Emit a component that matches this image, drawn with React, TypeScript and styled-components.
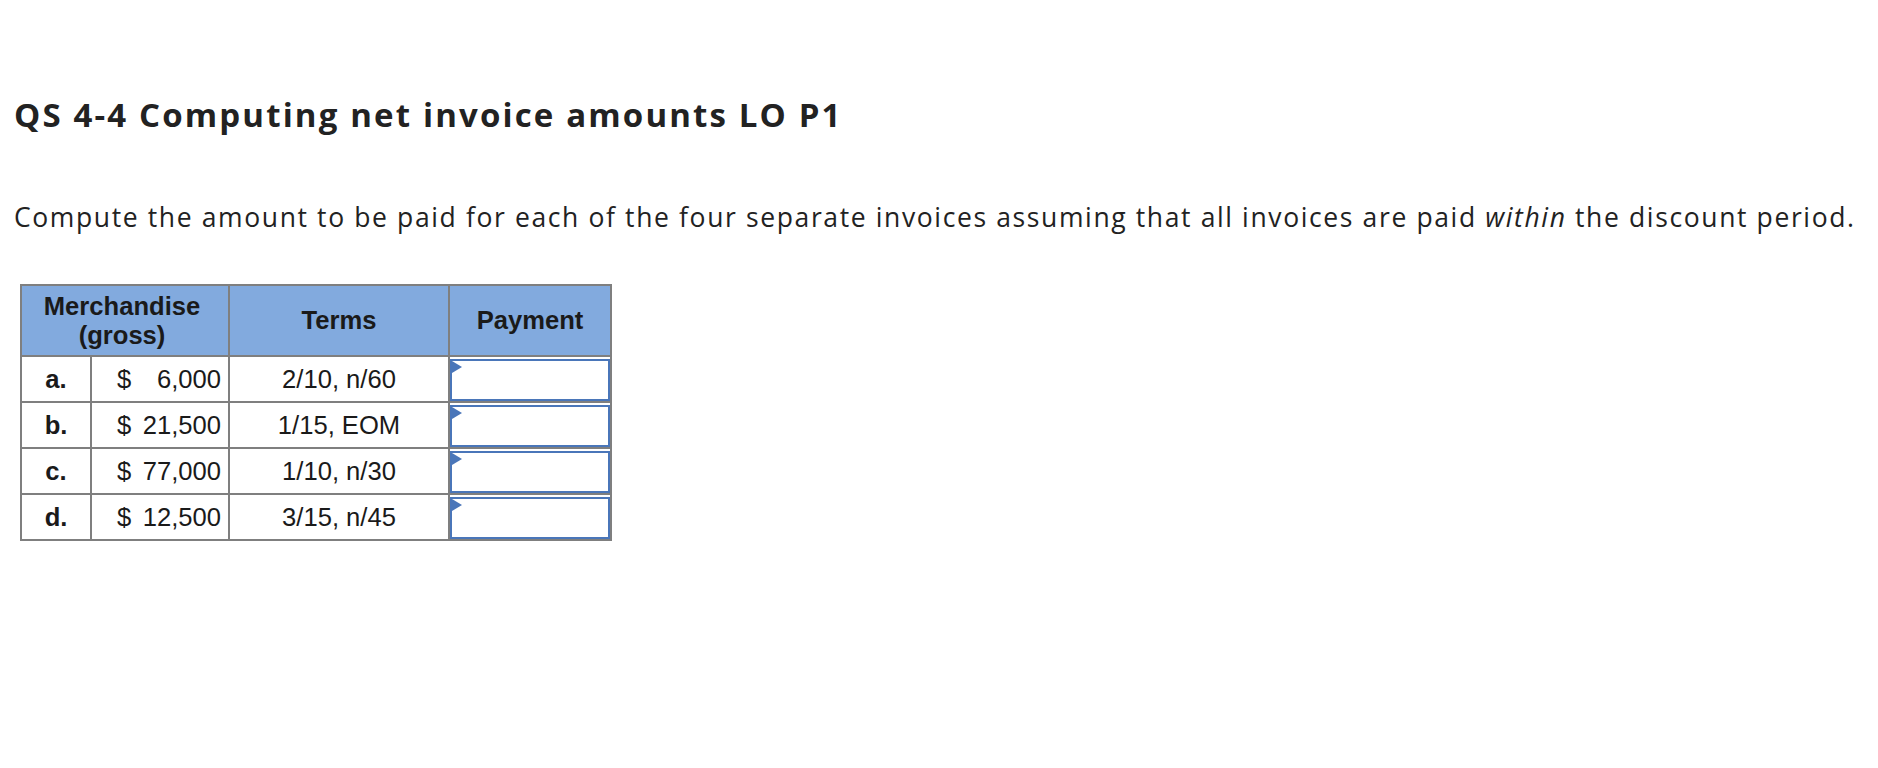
import React from 'react'
import styled, { createGlobalStyle } from 'styled-components'

type Invoice = {
  key: string
  amount: string
  terms: string
}

const invoices: Invoice[] = [
  { key: 'a.', amount: '6,000', terms: '2/10, n/60' },
  { key: 'b.', amount: '21,500', terms: '1/15, EOM' },
  { key: 'c.', amount: '77,000', terms: '1/10, n/30' },
  { key: 'd.', amount: '12,500', terms: '3/15, n/45' },
]

const GlobalStyle = createGlobalStyle`
  body {
    margin: 0;
    background: #ffffff;
  }
`

const Page = styled.div`
  padding: 95px 14px 40px;
  color: #222222;
  font-family: 'Open Sans', Lato, sans-serif;
`

const Title = styled.h2`
  margin: 0;
  font-size: 33px;
  line-height: 40px;
  font-weight: 700;
  letter-spacing: 2.15px;
`

const Prompt = styled.p`
  margin: 66px 0 0;
  font-size: 26.5px;
  line-height: 32px;
  font-weight: 400;
  letter-spacing: 1.62px;
  white-space: nowrap;
`

const Grid = styled.div`
  margin: 51px 0 0 6px;
  display: grid;
  grid-template-columns: 68px 136px 218px 160px;
  grid-template-rows: 69px repeat(4, 44px);
  gap: 2px;
  padding: 2px;
  width: max-content;
  background: #7f7f7f;
  font-family: 'Liberation Sans', Arial, sans-serif;
  font-size: 25.6px;
  color: #1a1a1a;
`

const HeadCell = styled.div<{ $span?: number }>`
  grid-column: span ${(p) => p.$span || 1};
  padding-right: ${(p) => (p.$span ? 6 : 0)}px;
  background: #82aade;
  font-weight: 700;
  line-height: 29px;
  text-align: center;
  display: flex;
  align-items: center;
  justify-content: center;
`

const Cell = styled.div`
  background: #ffffff;
  display: flex;
  align-items: center;
`

const LetterCell = styled(Cell)`
  justify-content: center;
  font-weight: 700;
`

const AmountCell = styled(Cell)`
  justify-content: space-between;
  padding: 0 7px 0 25px;
`

const TermsCell = styled(Cell)`
  justify-content: center;
`

const PaymentCell = styled(Cell)`
  align-items: flex-end;
  padding: 2px 0 0 0;
`

const PaymentBox = styled.div`
  position: relative;
  box-sizing: border-box;
  width: 100%;
  height: 42px;
  border: 2px solid #4a76b9;
  background: #ffffff;
`

const Marker = styled.span`
  position: absolute;
  left: 0;
  top: 0;
  width: 0;
  height: 0;
  border-top: 6px solid transparent;
  border-bottom: 6px solid transparent;
  border-left: 10px solid #4a76b9;
`

const App = () => (
  <>
    <GlobalStyle />
    <Page>
      <Title>QS 4-4 Computing net invoice amounts LO P1</Title>
      <Prompt>
        Compute the amount to be paid for each of the four separate invoices assuming that all
        invoices are paid <em>within</em> the discount period.
      </Prompt>
      <Grid>
        <HeadCell $span={2}>
          Merchandise
          <br />
          (gross)
        </HeadCell>
        <HeadCell>Terms</HeadCell>
        <HeadCell>Payment</HeadCell>
        {invoices.map((inv) => (
          <React.Fragment key={inv.key}>
            <LetterCell>{inv.key}</LetterCell>
            <AmountCell>
              <span>$</span>
              <span>{inv.amount}</span>
            </AmountCell>
            <TermsCell>{inv.terms}</TermsCell>
            <PaymentCell>
              <PaymentBox>
                <Marker />
              </PaymentBox>
            </PaymentCell>
          </React.Fragment>
        ))}
      </Grid>
    </Page>
  </>
)

export default App
